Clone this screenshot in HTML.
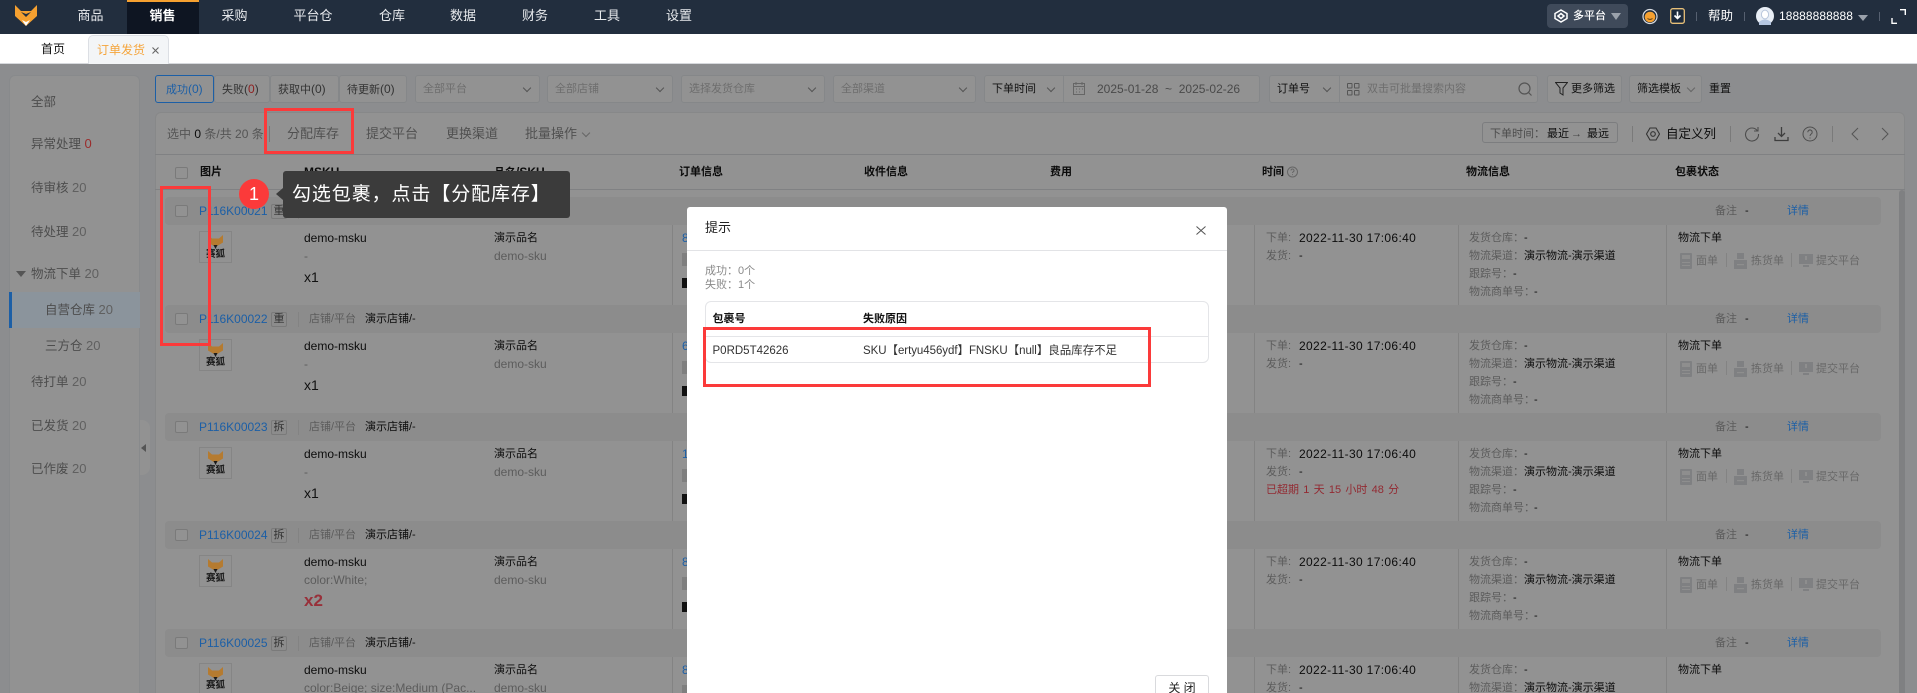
<!DOCTYPE html>
<html lang="zh-CN">
<head>
<meta charset="utf-8">
<title>订单发货</title>
<style>
html,body{margin:0;padding:0;width:1917px;height:693px;overflow:hidden}
body{background:#8c8d8f;font-family:"Liberation Sans","Noto Sans CJK SC",sans-serif;font-size:11px;color:#111}
#root{position:relative;width:1917px;height:693px;overflow:hidden;background:#8c8d8f}
div,span{box-sizing:border-box}
.a,.t{position:absolute}
.t{white-space:nowrap;line-height:18px}
.e{font-size:12px}
#top{position:absolute;left:0;top:0;width:1917px;height:34px;background:#222e3e}
.n{position:absolute;top:7px;line-height:18px;font-size:13px;color:#e8eaed;transform:translateX(-50%);white-space:nowrap}
#act{position:absolute;left:127px;top:0;width:72px;height:34px;background:#0e1522;border-top:2px solid #f5a030}
#tabs{position:absolute;left:0;top:34px;width:1917px;height:30px;background:#fff;border-bottom:1px solid #d6d8dc;font-size:12px}
#tab{position:absolute;left:88px;top:1px;width:81px;height:29px;background:#f3f5f7;border:1px solid #dcdfe4;border-bottom:none;border-radius:5px 5px 0 0}
#side{position:absolute;left:9px;top:75px;width:131px;height:618px;background:#929292;border:1px solid #888a8c;border-bottom:none;border-radius:6px 6px 0 0}
.s{position:absolute;font-size:12.5px;line-height:18px;color:#4d4d4d;white-space:nowrap}
.s i{font-style:normal;color:#606060;font-size:13px}
.f{position:absolute;top:75px;height:28px;background:#929292;border:1px solid #858789;border-radius:3px;line-height:26px;color:#6e6e6e;white-space:nowrap}
.f b{font-weight:400;position:absolute;top:0;left:7px}
.ch{position:absolute;width:6px;height:6px;border-right:1px solid #555;border-bottom:1px solid #555;transform:rotate(45deg)}
#main{position:absolute;left:155px;top:112px;width:1750px;height:581px;background:#929292;border:1px solid #878889;border-bottom:none;border-radius:6px 6px 0 0}
.hl{position:absolute;left:155px;width:1750px;height:1px;background:#808183}
.th{position:absolute;top:163px;line-height:18px;font-weight:700;color:#0b0b0b;white-space:nowrap}
.tb{position:absolute;top:125px;line-height:18px;font-size:13px;color:#505050;white-space:nowrap}
.row{position:absolute;left:0;width:1917px;height:108px}
.band{position:absolute;left:165px;top:0;width:1716px;height:28px;background:#8c8c8c;border-radius:4px}
.cb{position:absolute;left:175px;top:8px;width:13px;height:12px;background:#929292;border:1px solid #7a7a7a;border-radius:2px}
.id{left:199px;top:5px;color:#1c5fa6;font-size:12px}
.tag{position:absolute;left:271px;top:7px;width:16px;height:15px;border:1px solid #7a7a7a;border-radius:2px;font-size:11px;line-height:13px;text-align:center;color:#333}
.v{position:absolute;width:1px;background:#838383}
.g{color:#5c5c5c}
.k{color:#0c0c0c}
.img{position:absolute;left:199px;top:34px;width:33px;height:32px;border:1px solid #858585;background:#929292}
.img b{position:absolute;left:0;top:15px;width:31px;text-align:center;font-size:9.5px;line-height:15px;color:#171717}
.img svg{position:absolute;left:8px;top:3px}
.x1{left:304px;top:71px;font-size:14px;color:#111}
.op{position:absolute;top:56px}
.ot{color:#686868;top:55px}
.l1{left:1266px}.l2{left:1469px}.vv{left:1524px}
#dlg{position:absolute;left:687px;top:207px;width:540px;height:486px;background:#fff;border-radius:3px 3px 0 0}
</style>
</head>
<body>
<div id="root">

<svg width="0" height="0" style="position:absolute">
  <symbol id="fx" viewBox="0 0 15 14"><path d="M0 0L4 3.5h7L15 0v7.5L7.5 12 0 7.5Z" fill="#b57b30"/><path d="M5.5 10h4L7.5 14Z" fill="#1a1a1a"/></symbol>
  <symbol id="ic1" viewBox="0 0 12 16"><path d="M1 0h10a1 1 0 0 1 1 1v14a1 1 0 0 1-1 1H1a1 1 0 0 1-1-1V1a1 1 0 0 1 1-1Z" fill="#7f8082"/><rect x="2" y="2" width="8" height="4" fill="#8e8e8e"/><rect x="2" y="9" width="8" height="1" fill="#8e8e8e"/><rect x="2" y="12" width="8" height="1" fill="#8e8e8e"/></symbol>
  <symbol id="ic2" viewBox="0 0 13 16"><path d="M3 0h7v6H3Z" fill="#7f8082"/><path d="M0 7h13v9H0Z" fill="#7f8082"/><rect x="3" y="11" width="7" height="1.2" fill="#8e8e8e"/></symbol>
  <symbol id="ic3" viewBox="0 0 14 16"><path d="M0 1h14v10H0Z" fill="#7f8082"/><path d="M4 12h6v2H4Z" fill="#7f8082"/><rect x="6" y="3" width="2" height="4" fill="#8e8e8e"/></symbol>
</svg>

<div id="top">
  <svg class="a" style="left:15px;top:5px" width="22" height="21" viewBox="0 0 22 21"><path d="M0 0 L6 6 L16 6 L22 0 L22 11 L11 21 L0 11Z" fill="#f5a030"/><path d="M6 7 L11 12 L16 7 L11 9Z" fill="#222e3e"/><path d="M7 15 L11 21 L15 15 L11 17Z" fill="#fff"/></svg>
  <div id="act"></div>
  <span class="n" style="left:90.5px">商品</span>
  <span class="n" style="left:162.5px;color:#fff;font-weight:700">销售</span>
  <span class="n" style="left:234.5px">采购</span>
  <span class="n" style="left:313px">平台仓</span>
  <span class="n" style="left:392px">仓库</span>
  <span class="n" style="left:463px">数据</span>
  <span class="n" style="left:535px">财务</span>
  <span class="n" style="left:607px">工具</span>
  <span class="n" style="left:679px">设置</span>

  <div class="a" style="left:1547px;top:4px;width:81px;height:24px;background:#3f4a5a;border-radius:4px"></div>
  <svg class="a" style="left:1554px;top:9px" width="14" height="14" viewBox="0 0 14 14" fill="none" stroke="#fff" stroke-width="1.5"><path d="M7 1 L13 4.5 V9.5 L7 13 L1 9.5 V4.5Z"/><path d="M7 4.5 L10 7 L7 9.5 L4 7Z"/></svg>
  <span class="t" style="left:1573px;top:7px;color:#fff;font-size:11px;font-weight:500">多平台</span>
  <div class="a" style="left:1611px;top:13px;border-left:5px solid transparent;border-right:5px solid transparent;border-top:7px solid #9aa1ab"></div>
  <svg class="a" style="left:1642px;top:8px" width="16" height="17" viewBox="0 0 16 17"><circle cx="8" cy="8.5" r="7" fill="none" stroke="#d8dce2" stroke-width="1.2"/><circle cx="8" cy="9" r="5.3" fill="#f5a030"/><path d="M5.5 10.5q2.5 1.7 5 0" stroke="#5a3a10" fill="none"/></svg>
  <svg class="a" style="left:1670px;top:8px" width="15" height="16" viewBox="0 0 15 16"><rect x=".7" y=".7" width="13.6" height="14.6" rx="2" fill="#1c2a3c" stroke="#e8c078" stroke-width="1.3"/><path d="M7.5 3.5v7M4.5 7.5l3 3 3-3" fill="none" stroke="#fff" stroke-width="1.6"/></svg>
  <div class="a" style="left:1696px;top:12px;width:1px;height:9px;background:#566070"></div>
  <span class="t" style="left:1708px;top:7px;color:#fff;font-size:12.5px">帮助</span>
  <div class="a" style="left:1744px;top:12px;width:1px;height:9px;background:#566070"></div>
  <svg class="a" style="left:1756px;top:7px" width="18" height="18" viewBox="0 0 18 18"><circle cx="9" cy="9" r="9" fill="#e8eef6"/><ellipse cx="9" cy="7.5" rx="3.6" ry="4.4" fill="#fff" stroke="#b9c7dc"/><path d="M3 15q6-5 12 0v3H3z" fill="#b5c6e0"/></svg>
  <span class="t" style="left:1779px;top:7px;color:#fff;font-size:12px;letter-spacing:.05px">18888888888</span>
  <div class="a" style="left:1858px;top:15px;border-left:5px solid transparent;border-right:5px solid transparent;border-top:6px solid #9aa1ab"></div>
  <div class="a" style="left:1879px;top:12px;width:1px;height:9px;background:#566070"></div>
  <svg class="a" style="left:1891px;top:9px" width="15" height="15" viewBox="0 0 15 15" fill="none" stroke-width="1.4"><path d="M9 .7h5.3V6" stroke="#fff"/><path d="M1 9v5.3h5" stroke="#fff"/></svg>
</div>

<div id="tabs">
  <span class="t" style="left:41px;top:6px;color:#111">首页</span>
  <div id="tab">
    <span class="t" style="left:8px;top:5px;color:#f5a53c">订单发货</span>
    <svg class="a" style="left:63px;top:11px" width="7" height="7" viewBox="0 0 7 7"><path d="M.5.5l6 6M6.5.5l-6 6" stroke="#666" stroke-width="1.1"/></svg>
  </div>
</div>

<!-- sidebar -->
<div id="side"></div>
<div class="a" style="left:9px;top:292px;width:131px;height:36px;background:#8b949c"></div>
<div class="a" style="left:9px;top:292px;width:3px;height:36px;background:#1c5fa6"></div>
<span class="s" style="left:31px;top:93px">全部</span>
<span class="s" style="left:31px;top:135px">异常处理 <i style="color:#9b2c2c">0</i></span>
<span class="s" style="left:31px;top:179px">待审核 <i>20</i></span>
<span class="s" style="left:31px;top:223px">待处理 <i>20</i></span>
<div class="a" style="left:16px;top:271px;border-left:5px solid transparent;border-right:5px solid transparent;border-top:6px solid #555"></div>
<span class="s" style="left:31px;top:265px">物流下单 <i>20</i></span>
<span class="s" style="left:45px;top:301px">自营仓库 <i>20</i></span>
<span class="s" style="left:45px;top:337px">三方仓 <i>20</i></span>
<span class="s" style="left:31px;top:373px">待打单 <i>20</i></span>
<span class="s" style="left:31px;top:417px">已发货 <i>20</i></span>
<span class="s" style="left:31px;top:460px">已作废 <i>20</i></span>
<div class="a" style="left:140px;top:420px;width:10px;height:55px;background:#929292;border-radius:0 8px 8px 0"></div>
<div class="a" style="left:141px;top:444px;border-top:4px solid transparent;border-bottom:4px solid transparent;border-right:5px solid #555"></div>

<!-- filters -->
<div class="f" style="left:155px;width:59px;border-color:#1c5fa6;color:#1c5fa6"><b style="left:10px">成功<span class="e">(0)</span></b></div>
<div class="f" style="left:214px;width:56px;color:#333"><b>失败<span class="e">(<span style="color:#8f2020">0</span>)</span></b></div>
<div class="f" style="left:270px;width:69px;color:#333"><b>获取中<span class="e">(0)</span></b></div>
<div class="f" style="left:339px;width:68px;color:#333"><b>待更新<span class="e">(0)</span></b></div>
<div class="f" style="left:415px;width:125px"><b>全部平台</b><span class="ch" style="left:108px;top:9px"></span></div>
<div class="f" style="left:547px;width:126px"><b>全部店铺</b><span class="ch" style="left:109px;top:9px"></span></div>
<div class="f" style="left:681px;width:144px"><b>选择发货仓库</b><span class="ch" style="left:127px;top:9px"></span></div>
<div class="f" style="left:833px;width:143px"><b>全部渠道</b><span class="ch" style="left:126px;top:9px"></span></div>
<div class="f" style="left:984px;width:80px;color:#111;border-radius:3px 0 0 3px"><b>下单时间</b><span class="ch" style="left:63px;top:9px"></span></div>
<div class="f" style="left:1063px;width:197px;color:#4a4a4a;border-radius:0 3px 3px 0">
  <svg class="a" style="left:9px;top:6px" width="13" height="13" viewBox="0 0 13 13" fill="none" stroke="#666"><rect x=".5" y="1.5" width="11" height="11"/><path d="M.5 4.5h11M3 0v3M9 0v3M3 7h1M6 7h1M9 7h1M3 10h1M6 10h1"/></svg>
  <b class="e" style="left:33px">2025-01-28 &nbsp;~ &nbsp;2025-02-26</b></div>
<div class="f" style="left:1269px;width:71px;color:#111;border-radius:3px 0 0 3px"><b>订单号</b><span class="ch" style="left:54px;top:9px"></span></div>
<div class="f" style="left:1339px;width:199px;border-radius:0 3px 3px 0">
  <svg class="a" style="left:7px;top:7px" width="13" height="13" viewBox="0 0 13 13" fill="none" stroke="#555"><rect x=".5" y=".5" width="4.5" height="4.5" rx=".5"/><rect x="7.5" y=".5" width="4.5" height="4.5" rx=".5"/><rect x=".5" y="7.5" width="4.5" height="4.5" rx=".5"/><rect x="7.5" y="7.5" width="4.5" height="4.5" rx=".5"/></svg>
  <b style="left:27px">双击可批量搜索内容</b>
  <svg class="a" style="left:178px;top:6px" width="15" height="15" viewBox="0 0 15 15" fill="none" stroke="#555" stroke-width="1.2"><circle cx="6.5" cy="6.5" r="5.5"/><path d="M10.5 10.5l3 3"/></svg></div>
<div class="f" style="left:1547px;width:75px;color:#111">
  <svg class="a" style="left:7px;top:6px" width="13" height="14" viewBox="0 0 13 14" fill="none" stroke="#222"><path d="M.5.5h12L8 6v7L5 11V6Z"/></svg>
  <b style="left:23px">更多筛选</b></div>
<div class="f" style="left:1629px;width:73px;color:#111"><b>筛选模板</b><span class="ch" style="left:58px;top:9px;border-color:#666"></span></div>
<span class="t" style="left:1709px;top:80px;color:#111">重置</span>

<!-- main panel -->
<div id="main"></div>
<div class="hl" style="top:154px"></div>
<div class="hl" style="top:189px"></div>
<span class="t g e" style="left:167px;top:125px;color:#555">选中 <span class="k">0</span> 条/共 20 条</span>
<div class="a" style="left:269px;top:126px;width:1px;height:16px;background:#777"></div>
<span class="tb" style="left:287px">分配库存</span>
<span class="tb" style="left:366px">提交平台</span>
<span class="tb" style="left:446px">更换渠道</span>
<span class="tb" style="left:525px">批量操作</span>
<span class="ch" style="left:583px;top:130px;border-color:#666"></span>

<div class="a" style="left:1482px;top:122px;width:136px;height:21px;border:1px solid #7c7d7f;border-radius:3px"></div>
<span class="t" style="left:1490px;top:125px;color:#4c4c4c">下单时间：</span>
<span class="t k" style="left:1547px;top:125px">最近</span>
<span class="t" style="left:1571px;top:125px;color:#444">→</span>
<span class="t k" style="left:1587px;top:125px">最远</span>
<div class="a" style="left:1632px;top:126px;width:1px;height:16px;background:#7a7a7a"></div>
<svg class="a" style="left:1646px;top:127px" width="14" height="14" viewBox="0 0 14 14" fill="none" stroke="#333" stroke-width="1.1"><path d="M4 1h6l3.5 6L10 13H4L.5 7Z"/><circle cx="7" cy="7" r="2.3"/></svg>
<span class="t k" style="left:1666px;top:125px;font-size:12.5px">自定义列</span>
<div class="a" style="left:1730px;top:126px;width:1px;height:16px;background:#7a7a7a"></div>
<svg class="a" style="left:1744px;top:126px" width="16" height="16" viewBox="0 0 16 16" fill="none" stroke="#4d4d4d" stroke-width="1.1"><path d="M13.5 5A6.5 6.5 0 1 0 14.5 8"/><path d="M14 1v4h-4"/></svg>
<svg class="a" style="left:1774px;top:126px" width="15" height="16" viewBox="0 0 15 16" fill="none" stroke="#3e3e3e" stroke-width="1.3"><path d="M7.5 1v9M4 7l3.5 3.5L11 7M1 11v3.5h13V11"/></svg>
<svg class="a" style="left:1802px;top:126px" width="16" height="16" viewBox="0 0 16 16" fill="none" stroke="#4d4d4d"><circle cx="8" cy="8" r="7"/><path d="M5.8 6.2a2.2 2.2 0 1 1 3.4 1.8c-.8.5-1.2 1-1.2 2M8 11.5v1"/></svg>
<div class="a" style="left:1832px;top:126px;width:1px;height:16px;background:#7a7a7a"></div>
<svg class="a" style="left:1851px;top:127px" width="8" height="14" viewBox="0 0 8 14" fill="none" stroke="#555"><path d="M7 1L1 7l6 6"/></svg>
<svg class="a" style="left:1881px;top:127px" width="8" height="14" viewBox="0 0 8 14" fill="none" stroke="#555"><path d="M1 1l6 6-6 6"/></svg>

<div class="a" style="left:175px;top:167px;width:13px;height:12px;border:1px solid #7a7a7a;border-radius:2px"></div>
<span class="th" style="left:200px">图片</span>
<span class="th e" style="left:304px">MSKU</span>
<span class="th" style="left:494px">品名<span class="e">/SKU</span></span>
<span class="th" style="left:679px">订单信息</span>
<span class="th" style="left:864px">收件信息</span>
<span class="th" style="left:1050px">费用</span>
<span class="th" style="left:1262px">时间</span>
<svg class="a" style="left:1287px;top:166px" width="11" height="12" viewBox="0 0 11 12" fill="none" stroke="#666"><circle cx="5.5" cy="6" r="5"/><path d="M4 4.5a1.5 1.5 0 1 1 2.2 1.3c-.5.3-.7.6-.7 1.2M5.5 8.3v.8"/></svg>
<span class="th" style="left:1466px">物流信息</span>
<span class="th" style="left:1675px">包裹状态</span>
<div class="a" style="left:1899px;top:190px;width:6px;height:503px;background:#7f8082;border-radius:3px 3px 0 0"></div>

<!-- rows -->
<div class="row" style="top:197px">
  <div class="band"></div><div class="cb"></div><span class="t id">P116K00021</span><span class="tag">重</span>
  <div class="v" style="left:298px;top:7px;height:15px"></div>
  <span class="t g" style="left:309px;top:5px">店铺/平台</span><span class="t k" style="left:365px;top:5px">演示店铺/-</span>
  <div class="img"><svg width="15" height="14"><use href="#fx"/></svg><b>赛狐</b></div>
  <span class="t k e" style="left:304px;top:32px">demo-msku</span><span class="t g e" style="left:304px;top:50px">-</span><span class="t x1">x1</span>
  <span class="t k" style="left:494px;top:32px">演示品名</span><span class="t g e" style="left:494px;top:50px">demo-sku</span>
  <span class="t e" style="left:682px;top:32px;color:#1c5fa6">8</span><div class="a" style="left:682px;top:56px;width:5px;height:13px;background:#7f7f7f"></div><div class="a" style="left:682px;top:81px;width:5px;height:10px;background:#111"></div>
  <div class="v" style="left:672px;top:28px;height:80px"></div><div class="v" style="left:1254px;top:28px;height:80px"></div><div class="v" style="left:1458px;top:28px;height:80px"></div><div class="v" style="left:1666px;top:28px;height:80px"></div>
  <span class="t g" style="left:1715px;top:5px">备注</span><span class="t k" style="left:1745px;top:5px">-</span><span class="t" style="left:1787px;top:5px;color:#1c5fa6">详情</span>
  <span class="t g l1" style="top:32px">下单:</span><span class="t k e" style="left:1299px;top:32px;letter-spacing:.35px">2022-11-30 17:06:40</span>
  <span class="t g l1" style="top:50px">发货:</span><span class="t k" style="left:1299px;top:50px">-</span>
  <span class="t g l2" style="top:32px">发货仓库：</span><span class="t k vv" style="top:32px">-</span>
  <span class="t g l2" style="top:50px">物流渠道：</span><span class="t k vv" style="top:50px">演示物流-演示渠道</span>
  <span class="t g l2" style="top:68px">跟踪号：</span><span class="t k" style="left:1513px;top:68px">-</span>
  <span class="t g l2" style="top:86px">物流商单号：</span><span class="t k" style="left:1534px;top:86px">-</span>
  <span class="t k" style="left:1678px;top:32px">物流下单</span>
  <svg class="op" style="left:1680px" width="12" height="16"><use href="#ic1"/></svg><span class="t ot" style="left:1696px">面单</span><div class="v" style="left:1726px;top:56px;height:14px"></div>
  <svg class="op" style="left:1734px" width="13" height="16"><use href="#ic2"/></svg><span class="t ot" style="left:1751px">拣货单</span><div class="v" style="left:1791px;top:56px;height:14px"></div>
  <svg class="op" style="left:1799px" width="14" height="16"><use href="#ic3"/></svg><span class="t ot" style="left:1816px">提交平台</span>
</div>

<div class="row" style="top:305px">
  <div class="band"></div><div class="cb"></div><span class="t id">P116K00022</span><span class="tag">重</span>
  <div class="v" style="left:298px;top:7px;height:15px"></div>
  <span class="t g" style="left:309px;top:5px">店铺/平台</span><span class="t k" style="left:365px;top:5px">演示店铺/-</span>
  <div class="img"><svg width="15" height="14"><use href="#fx"/></svg><b>赛狐</b></div>
  <span class="t k e" style="left:304px;top:32px">demo-msku</span><span class="t g e" style="left:304px;top:50px">-</span><span class="t x1">x1</span>
  <span class="t k" style="left:494px;top:32px">演示品名</span><span class="t g e" style="left:494px;top:50px">demo-sku</span>
  <span class="t e" style="left:682px;top:32px;color:#1c5fa6">6</span><div class="a" style="left:682px;top:56px;width:5px;height:13px;background:#7f7f7f"></div><div class="a" style="left:682px;top:81px;width:5px;height:10px;background:#111"></div>
  <div class="v" style="left:672px;top:28px;height:80px"></div><div class="v" style="left:1254px;top:28px;height:80px"></div><div class="v" style="left:1458px;top:28px;height:80px"></div><div class="v" style="left:1666px;top:28px;height:80px"></div>
  <span class="t g" style="left:1715px;top:5px">备注</span><span class="t k" style="left:1745px;top:5px">-</span><span class="t" style="left:1787px;top:5px;color:#1c5fa6">详情</span>
  <span class="t g l1" style="top:32px">下单:</span><span class="t k e" style="left:1299px;top:32px;letter-spacing:.35px">2022-11-30 17:06:40</span>
  <span class="t g l1" style="top:50px">发货:</span><span class="t k" style="left:1299px;top:50px">-</span>
  <span class="t g l2" style="top:32px">发货仓库：</span><span class="t k vv" style="top:32px">-</span>
  <span class="t g l2" style="top:50px">物流渠道：</span><span class="t k vv" style="top:50px">演示物流-演示渠道</span>
  <span class="t g l2" style="top:68px">跟踪号：</span><span class="t k" style="left:1513px;top:68px">-</span>
  <span class="t g l2" style="top:86px">物流商单号：</span><span class="t k" style="left:1534px;top:86px">-</span>
  <span class="t k" style="left:1678px;top:32px">物流下单</span>
  <svg class="op" style="left:1680px" width="12" height="16"><use href="#ic1"/></svg><span class="t ot" style="left:1696px">面单</span><div class="v" style="left:1726px;top:56px;height:14px"></div>
  <svg class="op" style="left:1734px" width="13" height="16"><use href="#ic2"/></svg><span class="t ot" style="left:1751px">拣货单</span><div class="v" style="left:1791px;top:56px;height:14px"></div>
  <svg class="op" style="left:1799px" width="14" height="16"><use href="#ic3"/></svg><span class="t ot" style="left:1816px">提交平台</span>
</div>

<div class="row" style="top:413px">
  <div class="band"></div><div class="cb"></div><span class="t id">P116K00023</span><span class="tag">拆</span>
  <div class="v" style="left:298px;top:7px;height:15px"></div>
  <span class="t g" style="left:309px;top:5px">店铺/平台</span><span class="t k" style="left:365px;top:5px">演示店铺/-</span>
  <div class="img"><svg width="15" height="14"><use href="#fx"/></svg><b>赛狐</b></div>
  <span class="t k e" style="left:304px;top:32px">demo-msku</span><span class="t g e" style="left:304px;top:50px">-</span><span class="t x1">x1</span>
  <span class="t k" style="left:494px;top:32px">演示品名</span><span class="t g e" style="left:494px;top:50px">demo-sku</span>
  <span class="t e" style="left:682px;top:32px;color:#1c5fa6">1</span><div class="a" style="left:682px;top:56px;width:5px;height:13px;background:#7f7f7f"></div><div class="a" style="left:682px;top:81px;width:5px;height:10px;background:#111"></div>
  <div class="v" style="left:672px;top:28px;height:80px"></div><div class="v" style="left:1254px;top:28px;height:80px"></div><div class="v" style="left:1458px;top:28px;height:80px"></div><div class="v" style="left:1666px;top:28px;height:80px"></div>
  <span class="t g" style="left:1715px;top:5px">备注</span><span class="t k" style="left:1745px;top:5px">-</span><span class="t" style="left:1787px;top:5px;color:#1c5fa6">详情</span>
  <span class="t g l1" style="top:32px">下单:</span><span class="t k e" style="left:1299px;top:32px;letter-spacing:.35px">2022-11-30 17:06:40</span>
  <span class="t g l1" style="top:50px">发货:</span><span class="t k" style="left:1299px;top:50px">-</span>
  <span class="t l1" style="top:68px;color:#932a32;word-spacing:1.2px">已超期 1 天 15 小时 48 分</span>
  <span class="t g l2" style="top:32px">发货仓库：</span><span class="t k vv" style="top:32px">-</span>
  <span class="t g l2" style="top:50px">物流渠道：</span><span class="t k vv" style="top:50px">演示物流-演示渠道</span>
  <span class="t g l2" style="top:68px">跟踪号：</span><span class="t k" style="left:1513px;top:68px">-</span>
  <span class="t g l2" style="top:86px">物流商单号：</span><span class="t k" style="left:1534px;top:86px">-</span>
  <span class="t k" style="left:1678px;top:32px">物流下单</span>
  <svg class="op" style="left:1680px" width="12" height="16"><use href="#ic1"/></svg><span class="t ot" style="left:1696px">面单</span><div class="v" style="left:1726px;top:56px;height:14px"></div>
  <svg class="op" style="left:1734px" width="13" height="16"><use href="#ic2"/></svg><span class="t ot" style="left:1751px">拣货单</span><div class="v" style="left:1791px;top:56px;height:14px"></div>
  <svg class="op" style="left:1799px" width="14" height="16"><use href="#ic3"/></svg><span class="t ot" style="left:1816px">提交平台</span>
</div>

<div class="row" style="top:521px">
  <div class="band"></div><div class="cb"></div><span class="t id">P116K00024</span><span class="tag">拆</span>
  <div class="v" style="left:298px;top:7px;height:15px"></div>
  <span class="t g" style="left:309px;top:5px">店铺/平台</span><span class="t k" style="left:365px;top:5px">演示店铺/-</span>
  <div class="img"><svg width="15" height="14"><use href="#fx"/></svg><b>赛狐</b></div>
  <span class="t k e" style="left:304px;top:32px">demo-msku</span><span class="t g e" style="left:304px;top:50px">color:White;</span><span class="t" style="left:304px;top:71px;font-size:17px;font-weight:700;color:#98303a">x2</span>
  <span class="t k" style="left:494px;top:32px">演示品名</span><span class="t g e" style="left:494px;top:50px">demo-sku</span>
  <span class="t e" style="left:682px;top:32px;color:#1c5fa6">8</span><div class="a" style="left:682px;top:56px;width:5px;height:13px;background:#7f7f7f"></div><div class="a" style="left:682px;top:81px;width:5px;height:10px;background:#111"></div>
  <div class="v" style="left:672px;top:28px;height:80px"></div><div class="v" style="left:1254px;top:28px;height:80px"></div><div class="v" style="left:1458px;top:28px;height:80px"></div><div class="v" style="left:1666px;top:28px;height:80px"></div>
  <span class="t g" style="left:1715px;top:5px">备注</span><span class="t k" style="left:1745px;top:5px">-</span><span class="t" style="left:1787px;top:5px;color:#1c5fa6">详情</span>
  <span class="t g l1" style="top:32px">下单:</span><span class="t k e" style="left:1299px;top:32px;letter-spacing:.35px">2022-11-30 17:06:40</span>
  <span class="t g l1" style="top:50px">发货:</span><span class="t k" style="left:1299px;top:50px">-</span>
  <span class="t g l2" style="top:32px">发货仓库：</span><span class="t k vv" style="top:32px">-</span>
  <span class="t g l2" style="top:50px">物流渠道：</span><span class="t k vv" style="top:50px">演示物流-演示渠道</span>
  <span class="t g l2" style="top:68px">跟踪号：</span><span class="t k" style="left:1513px;top:68px">-</span>
  <span class="t g l2" style="top:86px">物流商单号：</span><span class="t k" style="left:1534px;top:86px">-</span>
  <span class="t k" style="left:1678px;top:32px">物流下单</span>
  <svg class="op" style="left:1680px" width="12" height="16"><use href="#ic1"/></svg><span class="t ot" style="left:1696px">面单</span><div class="v" style="left:1726px;top:56px;height:14px"></div>
  <svg class="op" style="left:1734px" width="13" height="16"><use href="#ic2"/></svg><span class="t ot" style="left:1751px">拣货单</span><div class="v" style="left:1791px;top:56px;height:14px"></div>
  <svg class="op" style="left:1799px" width="14" height="16"><use href="#ic3"/></svg><span class="t ot" style="left:1816px">提交平台</span>
</div>

<div class="row" style="top:629px;height:64px">
  <div class="band"></div><div class="cb"></div><span class="t id">P116K00025</span><span class="tag">拆</span>
  <div class="v" style="left:298px;top:7px;height:15px"></div>
  <span class="t g" style="left:309px;top:5px">店铺/平台</span><span class="t k" style="left:365px;top:5px">演示店铺/-</span>
  <div class="img" style="height:30px;border-bottom:none"><svg width="15" height="14"><use href="#fx"/></svg><b style="line-height:13px">赛狐</b></div>
  <span class="t k e" style="left:304px;top:32px">demo-msku</span><span class="t g e" style="left:304px;top:54px;line-height:10px">color:Beige; size:Medium (Pac...</span>
  <span class="t k" style="left:494px;top:32px">演示品名</span><span class="t g e" style="left:494px;top:54px;line-height:10px">demo-sku</span>
  <span class="t e" style="left:682px;top:32px;color:#1c5fa6">8</span><div class="a" style="left:682px;top:56px;width:5px;height:8px;background:#7f7f7f"></div>
  <div class="v" style="left:672px;top:28px;height:36px"></div><div class="v" style="left:1254px;top:28px;height:36px"></div><div class="v" style="left:1458px;top:28px;height:36px"></div><div class="v" style="left:1666px;top:28px;height:36px"></div>
  <span class="t g" style="left:1715px;top:5px">备注</span><span class="t k" style="left:1745px;top:5px">-</span><span class="t" style="left:1787px;top:5px;color:#1c5fa6">详情</span>
  <span class="t g l1" style="top:32px">下单:</span><span class="t k e" style="left:1299px;top:32px;letter-spacing:.35px">2022-11-30 17:06:40</span>
  <span class="t g l1" style="top:54px;line-height:10px">发货:</span><span class="t k" style="left:1299px;top:54px;line-height:10px">-</span>
  <span class="t g l2" style="top:32px">发货仓库：</span><span class="t k vv" style="top:32px">-</span>
  <span class="t g l2" style="top:54px;line-height:10px">物流渠道：</span><span class="t k vv" style="top:54px;line-height:10px">演示物流-演示渠道</span>
  <span class="t k" style="left:1678px;top:32px">物流下单</span>
</div>

<!-- red annotations -->
<div class="a" style="left:264px;top:108px;width:90px;height:46px;border:3px solid #fb3a3a"></div>
<div class="a" style="left:160px;top:186px;width:51px;height:160px;border:3px solid #fb3a3a"></div>

<!-- callout -->
<div class="a" style="left:239px;top:179px;width:30px;height:30px;border-radius:50%;background:#fb3a3a;color:#fff;text-align:center;line-height:30px;font-size:18px">1</div>
<div class="a" style="left:276px;top:188px;border-top:6px solid transparent;border-bottom:6px solid transparent;border-right:7px solid #3b3b3b"></div>
<div class="a" style="left:283px;top:171px;width:287px;height:47px;background:#3b3b3b;border-radius:3px"></div>
<span class="t" style="left:292px;top:183px;line-height:24px;font-size:19px;letter-spacing:.9px;color:#fff">勾选包裹，点击【分配库存】</span>

<!-- dialog -->
<div id="dlg">
  <span class="t" style="left:18px;top:12px;font-size:13px;color:#222">提示</span>
  <svg class="a" style="left:509px;top:19px" width="10" height="9" viewBox="0 0 10 9"><path d="M.5.5l9 8M9.5.5l-9 8" stroke="#555"/></svg>
  <div class="a" style="left:0;top:43px;width:540px;height:1px;background:#e2e3e6"></div>
  <span class="t" style="left:18px;top:55px;color:#8a8a8a">成功：0个</span>
  <span class="t" style="left:18px;top:69px;color:#8a8a8a">失败：1个</span>
  <div class="a" style="left:18px;top:94px;width:504px;height:62px;border:1px solid #e4e5e8;border-radius:6px"></div>
  <div class="a" style="left:18px;top:129px;width:504px;height:1px;background:#e4e5e8"></div>
  <span class="t" style="left:25.5px;top:103px;font-weight:700;color:#111">包裹号</span>
  <span class="t" style="left:176px;top:103px;font-weight:700;color:#111">失败原因</span>
  <span class="t" style="left:25.5px;top:135px;font-size:11.5px;color:#333">P0RD5T42626</span>
  <span class="t" style="left:176px;top:135px;font-size:11.5px;letter-spacing:-.05px;color:#333">SKU【ertyu456ydf】FNSKU【null】良品库存不足</span>
  <div class="a" style="left:468px;top:468px;width:54px;height:18px;border:1px solid #d9dadd;border-bottom:none;border-radius:3px 3px 0 0"></div>
  <span class="t e" style="left:468px;top:476px;width:54px;text-align:center;line-height:10px;color:#222">关 闭</span>
</div>
<div class="a" style="left:703px;top:327px;width:448px;height:60px;border:3px solid #fb3a3a"></div>

</div>
</body>
</html>
